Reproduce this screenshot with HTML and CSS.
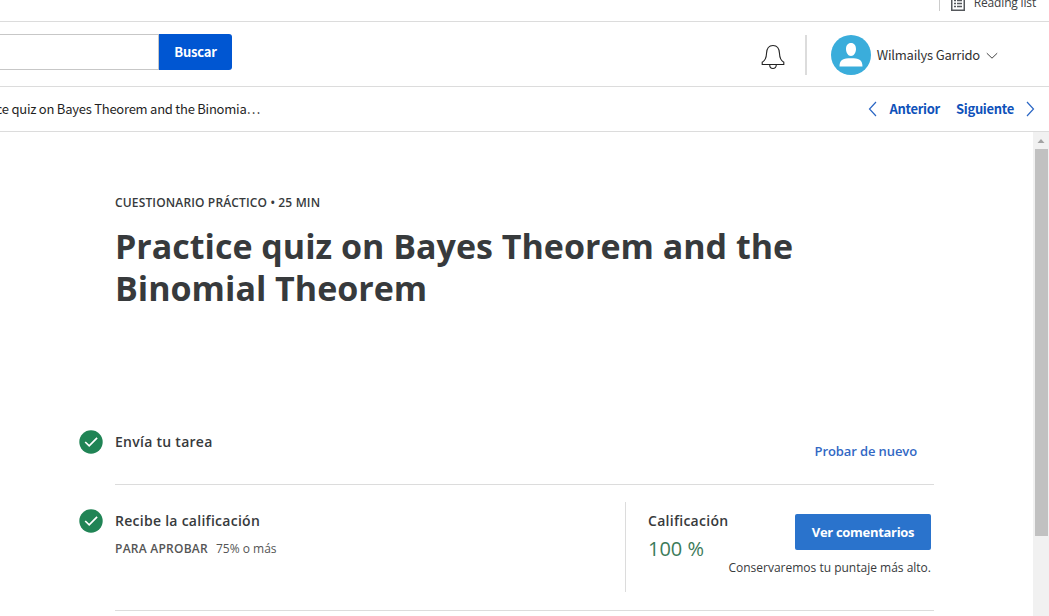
FILE: index.html
```html
<!DOCTYPE html>
<html lang="es">
<head>
<meta charset="utf-8">
<title>Practice quiz on Bayes Theorem and the Binomial Theorem</title>
<link rel="stylesheet" href="styles.css">
</head>
<body>
<div class="bookmarks">
  <span class="bookmarks-divider"></span>
  <svg class="list-icon" width="14" height="16" viewBox="0 0 14 16"><rect x=".75" y="1.75" width="12.5" height="13.5" fill="none" stroke="#55585c" stroke-width="1.5"/><path d="M3 5.500h2M6 5.500h5M3 8.500h2M6 8.500h5M3 11.500h2M6 11.500h5" stroke="#55585c" stroke-width="1.4"/></svg>
  <span class="reading">Reading list</span>
</div>
<header class="header">
  <div class="search"><div class="search-field"></div><button class="search-button"><span>Buscar</span></button></div>
  <div class="account">
    <svg class="bell" width="24" height="26" viewBox="0 0 24 26" fill="none" stroke="#222" stroke-width="1.1"><path d="M1.200 20.500v-2.300C4 16.700 5.300 14.500 5.500 9.500 5.700 4.500 8 1.500 12 1.500s6.300 3 6.500 8c.2 5 1.500 7.200 4.300 8.700v2.300zM8.700 20.700c0 5 6.600 5 6.600 0"/></svg>
    <span class="account-divider"></span>
    <svg class="avatar" width="40" height="40" viewBox="0 0 40 40"><circle cx="20" cy="20" r="20" fill="#3aaddb"/><path d="M20 8c3.200 0 5 2.500 5 6s-2 7-5 7-5-3.500-5-7 1.800-6 5-6zM8.500 31.500c0-7 4-8.300 11.500-8.300s11.500 1.300 11.500 8.300z" fill="#fff"/></svg>
    <span class="user-name">Wilmailys Garrido</span>
    <svg class="chevron" width="12" height="8" viewBox="0 0 12 8"><path d="M.8 1.200 6 6.200l5.200-5" fill="none" stroke="#444" stroke-width="1"/></svg>
  </div>
</header>
<nav class="lesson-nav">
  <div class="crumb"><span>ce quiz on Bayes Theorem and the Binomia…</span></div>
  <div class="pager">
    <svg width="9" height="16" viewBox="0 0 9 16"><path d="M8 1 1.500 8 8 15" fill="none" stroke="#2a66c4" stroke-width="1.2"/></svg>
    <a class="prev">Anterior</a>
    <a class="next">Siguiente</a>
    <svg width="9" height="16" viewBox="0 0 9 16"><path d="M1 1l6.500 7L1 15" fill="none" stroke="#2a66c4" stroke-width="1.2"/></svg>
  </div>
</nav>
<div class="body">
  <main class="content">
    <p class="kicker">CUESTIONARIO PRÁCTICO • 25 MIN</p>
    <h1 class="title">Practice quiz on Bayes Theorem and the<br>Binomial Theorem</h1>
    <section class="step submit">
      <svg class="check" width="24" height="24" viewBox="0 0 24 24"><circle cx="12" cy="12" r="11.700" fill="#208455"/><path d="M6.200 12l4 3.800 7.900-7.900" fill="none" stroke="#fff" stroke-width="1.700"/></svg>
      <div class="step-body">
        <h2 class="label submit-label">Envía tu tarea</h2>
        <a class="retry">Probar de nuevo</a>
      </div>
    </section>
    <section class="step grade">
      <svg class="check" width="24" height="24" viewBox="0 0 24 24"><circle cx="12" cy="12" r="11.700" fill="#208455"/><path d="M6.200 12l4 3.800 7.900-7.900" fill="none" stroke="#fff" stroke-width="1.700"/></svg>
      <div class="step-body">
        <div class="requirement">
          <h2 class="label">Recibe la calificación</h2>
          <p class="pass"><strong>PARA APROBAR</strong><span>75% o más</span></p>
        </div>
        <div class="result">
          <div class="score">
            <h2 class="label score-label">Calificación</h2>
            <p class="points">100 %</p>
          </div>
          <div class="feedback">
            <button class="feedback-button"><span>Ver comentarios</span></button>
            <p class="note">Conservaremos tu puntaje más alto.</p>
          </div>
        </div>
      </div>
    </section>
  </main>
  <div class="scrollbar">
    <svg width="16" height="17" viewBox="0 0 16 17"><path d="M4.500 11 8 7l3.500 4z" fill="#a3a3a3"/></svg>
    <div class="thumb"></div>
  </div>
</div>
</body>
</html>
```
FILE: styles.css
```css
* { box-sizing: border-box; }
html, body { height: 100%; }
body { margin: 0; overflow: hidden; background: #fff; color: #373a3c; font-family: "Open Sans", "Noto Sans", sans-serif; display: flex; flex-direction: column; }
h1, h2, p { margin: 0; }
button { border: 0; padding: 0; font-family: inherit; color: #fff; white-space: nowrap; }
svg { display: block; flex: none; }
span, a, h1, h2, p { white-space: nowrap; }
.bookmarks { height: 22px; flex: none; border-bottom: 1px solid #dcdcdc; display: flex; align-items: flex-start; justify-content: flex-end; padding-right: 13px; overflow: hidden; }
.bookmarks-divider { width: 1px; height: 11px; background: #ccc; margin-right: 11px; }
.list-icon { margin-top: -5px; margin-right: 9px; }
.reading { font-size: 12px; line-height: 16px; letter-spacing: -.17px; margin-top: -5px; color: #3c4043; }
.header, .lesson-nav, .search-button { font-family: "Noto Sans CJK SC", "Open Sans", sans-serif; }
.header { height: 65px; flex: none; border-bottom: 1px solid #dcdcdc; display: flex; justify-content: space-between; }
.search { display: flex; margin-top: 12px; height: 36px; }
.search-field { width: 159px; border: 1px solid #c7c7c7; border-left: 0; }
.search-button { width: 73px; background: #0056d2; border-radius: 0 3px 3px 0; font-size: 13px; font-weight: 700; line-height: 36px; letter-spacing: -.2px; }
.account { display: flex; align-items: center; padding: 0 51px 0 0; }
.bell { margin: 6px 20px 0 0; }
.account-divider { width: 2px; height: 40px; background: #dcdcdc; margin: 2px 24px 0 0; }
.avatar { margin-top: 2px; }
.user-name { font-size: 13px; line-height: 20px; letter-spacing: -.22px; margin: 2px 6px 0 6px; color: #333; }
.chevron { margin-top: 3px; }
.lesson-nav { height: 45px; flex: none; border-bottom: 1px solid #dcdcdc; display: flex; align-items: center; justify-content: space-between; padding-right: 14px; }
.crumb { width: 260px; display: flex; justify-content: flex-end; overflow: hidden; font-size: 13px; line-height: 20px; letter-spacing: -.24px; color: #1f1f1f; }
.pager { display: flex; align-items: center; }
.pager a { font-size: 13px; font-weight: 700; line-height: 20px; letter-spacing: -.3px; color: #0f52ba; }
.prev { margin: 0 16px 0 12px; }
.next { margin-right: 12px; }
.body { flex: 1; min-height: 0; display: flex; justify-content: space-between; }
.content { width: 934px; padding: 62px 0 0 79px; }
.kicker { margin-left: 36px; font-size: 12px; font-weight: 600; line-height: 18px; letter-spacing: .15px; }
.title { margin-left: 36px; padding-top: 13px; font-size: 34px; font-weight: 700; line-height: 42px; }
.step { display: flex; gap: 12px; }
.step-body { width: 819px; border-bottom: 1px solid #dcdcdc; display: flex; justify-content: space-between; }
.submit { margin-top: 122px; height: 54px; }
.check { margin-top: -1px; }
.label { font-size: 14px; font-weight: 600; line-height: 22px; letter-spacing: .27px; }
.retry { color: #3268c4; font-size: 13px; font-weight: 600; line-height: 20px; letter-spacing: -.1px; margin: 10px 17px 0 0; }
.grade { height: 126px; padding-top: 0; }
.grade > .check { margin-top: 24px; }
.requirement { padding-top: 25px; }
.pass { display: flex; gap: 8px; font-size: 12px; line-height: 18px; margin-top: 8px; color: #555; }
.pass strong { font-weight: 600; letter-spacing: .25px; }
.result { width: 309px; height: 90px; margin-top: 17px; border-left: 1px solid #dcdcdc; display: flex; justify-content: space-between; padding-right: 3px; }
.score { padding: 8px 0 0 22px; width: 103px; }
.points { font-size: 20px; line-height: 26px; margin-top: 4px; color: #3c7b5a; }
.feedback { display: flex; flex-direction: column; align-items: flex-end; padding-top: 12px; }
.feedback-button { width: 136px; height: 36px; flex: none; background: #2a73cc; border-radius: 2px; font-size: 13px; font-weight: 700; line-height: 36px; letter-spacing: -.3px; }
.note { font-size: 12px; line-height: 18px; margin-top: 9px; }
.scrollbar { width: 16px; background: #f1f1f1; }
.thumb { width: 13px; height: 387px; margin-left: 2px; background: #c1c1c1; }
```
